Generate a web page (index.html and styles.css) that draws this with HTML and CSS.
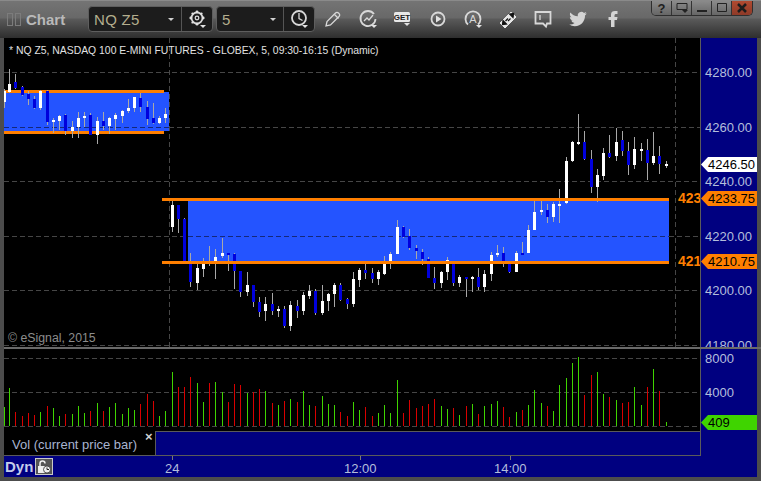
FILE: index.html
```html
<!DOCTYPE html>
<html lang="en">
<head>
<meta charset="utf-8">
<title>Chart</title>
<link rel="stylesheet" href="styles.css">
</head>
<body>
<div class="window">
  <header class="titlebar">
    <div class="grip"><i></i><i></i></div>
    <div class="app-name">Chart</div>
    <div class="combo combo-symbol">
      <span class="combo-value">NQ Z5</span><span class="caret"></span>
      <span class="combo-btn">
        <svg width="22" height="22" viewBox="0 0 22 22"><circle class="ic" cx="11" cy="10" r="5.500"/><circle class="ic-fill" cx="11" cy="3.800" r="1.400"/><circle class="ic-fill" cx="11" cy="16.200" r="1.400"/><circle class="ic-fill" cx="4.800" cy="10" r="1.400"/><circle class="ic-fill" cx="17.200" cy="10" r="1.400"/><circle class="ic-fill" cx="6.600" cy="5.600" r="1.200"/><circle class="ic-fill" cx="15.400" cy="5.600" r="1.200"/><circle class="ic-fill" cx="6.600" cy="14.400" r="1.200"/><circle class="ic-thin" cx="11" cy="10" r="1.800"/><path class="ic-fill" d="M14 17h6l-3 3z"/></svg>
      </span>
    </div>
    <div class="combo combo-interval">
      <span class="combo-value">5</span><span class="caret"></span>
      <span class="combo-btn">
        <svg width="22" height="22" viewBox="0 0 22 22"><circle class="ic" cx="11" cy="10" r="7"/><path class="ic-thin" d="M11 5v5.500l3.500 2"/><path class="ic-fill" d="M14 17h6l-3 3z"/></svg>
      </span>
    </div>
    <div class="tools">
      <svg width="22" height="22" viewBox="0 0 22 22"><path class="ic-thin" d="M4 18l1-4.500L13.500 5a2 2 0 0 1 3 0l.5.500a2 2 0 0 1 0 3L8.500 17z"/><path class="ic-thin" d="M12.500 6.500l4 4"/></svg>
      <svg width="22" height="22" viewBox="0 0 22 22"><path class="ic" d="M17 6A7.500 7.500 0 1 0 18.500 11"/><path class="ic-thin" d="M7 13l3-3 2 2 4-5"/><path class="ic-fill" d="M14 17h6l-3 3z"/></svg>
      <svg width="22" height="22" viewBox="0 0 22 22"><rect class="get-box" x="2" y="4" width="16" height="10" rx="1.500"/><text class="get-text" x="10" y="12">GET</text><path class="ic-fill" d="M12 15h6l-3 3z"/></svg>
      <svg width="22" height="22" viewBox="0 0 22 22"><circle class="ic" cx="11" cy="11" r="6.500"/><path class="ic-fill" d="M9 7.500l5.500 3.500L9 14.500z"/></svg>
      <svg width="22" height="22" viewBox="0 0 22 22"><path class="ic" d="M6 16.500a7.500 7.500 0 1 1 10 0"/><text class="a-text" x="11" y="15">A</text><path class="ic-fill" d="M14 17h6l-3 3z"/></svg>
      <svg width="22" height="22" viewBox="0 0 22 22"><path class="diamond" d="M14 4l5 5L8 20l-5-5z"/><path class="ic-cut" d="M12.500 6l4-.5-.5 4zM6 12.500l-.5 4 4-.5zM8.500 13L11 10.500M11 13l2.500-2.500"/></svg>
      <svg width="22" height="22" viewBox="0 0 22 22"><path class="ic" d="M3.500 4h15v11.500h-3.500l-1 3-3-3h-7.500z"/><path class="ic-thin" d="M8 7v5"/></svg>
      <svg width="22" height="22" viewBox="-3 -3 30 30"><path class="ic-soft" d="M23.953 4.57a10 10 0 01-2.825.775 4.958 4.958 0 002.163-2.723c-.951.555-2.005.959-3.127 1.184a4.92 4.92 0 00-8.384 4.482C7.69 8.095 4.067 6.13 1.64 3.162a4.822 4.822 0 00-.666 2.475c0 1.71.87 3.213 2.188 4.096a4.904 4.904 0 01-2.228-.616v.06a4.923 4.923 0 003.946 4.827 4.996 4.996 0 01-2.212.085 4.936 4.936 0 004.604 3.417 9.867 9.867 0 01-6.102 2.105c-.39 0-.779-.023-1.17-.067a13.995 13.995 0 007.557 2.209c9.053 0 13.998-7.496 13.998-13.985 0-.21 0-.42-.015-.63A9.935 9.935 0 0024 4.59z"/></svg>
      <svg width="22" height="22" viewBox="0 0 22 22"><path class="ic-soft" d="M9 19v-7H6.500V9H9V6.500C9 4 10.500 3 13 3h2.500v3H14c-1 0-1.500.5-1.500 1.500V9h3l-.5 3h-2.500v7z"/></svg>
    </div>
    <nav class="winbtns">
      <span class="winbtn help">?</span>
      <span class="winbtn"><svg width="16" height="14" viewBox="0 0 16 14"><path class="wb-line" d="M3 2.500h10v6H3z"/><path class="wb-fill" d="M8 9h6l-3 3z"/></svg></span>
      <span class="winbtn"><svg width="16" height="14" viewBox="0 0 16 14"><path class="wb-fill" d="M3 9h10v2H3z"/></svg></span>
      <span class="winbtn"><svg width="16" height="14" viewBox="0 0 16 14"><path class="wb-line" d="M3.500 2.500h9v8h-9z"/></svg></span>
      <span class="winbtn close"><svg width="16" height="14" viewBox="0 0 16 14"><path class="wb-x" d="M4 3l8 8M12 3l-8 8"/></svg></span>
    </nav>
  </header>

  <section class="row price-row">
    <div class="pane price-pane">
      <svg id="price" class="plot" viewBox="4 38 696 309" width="696" height="309">
        <rect class="band" x="4" y="92" width="165" height="39"/>
        <rect class="band" x="188" y="200" width="481" height="61"/>
        <path class="grid" d="M4 72.500H700M169 127.500H700M4 181.500H700M4 236.500H188M669 236.500H700M4 290.500H700M4 345.500H700"/>
        <path class="grid-band" d="M4 127.500H169M188 236.500H669"/>
        <path class="grid" d="M169.500 38V347M675.500 38V347"/>
        <rect class="level" x="4" y="90" width="160" height="3"/>
        <rect class="level" x="4" y="131" width="160" height="3"/>
        <g id="candles"></g>
        <rect class="level" x="162" y="198" width="507" height="3"/>
        <rect class="level" x="162" y="261" width="507" height="3"/>
      </svg>
      <div class="study-title">* NQ Z5, NASDAQ 100 E-MINI FUTURES - GLOBEX, 5, 09:30-16:15 (Dynamic)</div>
      <div class="copyright">© eSignal, 2015</div>
      <b class="level-text level-a">423</b>
      <b class="level-text level-b">421</b>
    </div>
    <div class="axis">
      <span class="tick t-4280">4280.00</span>
      <span class="tick t-4260">4260.00</span>
      <span class="tick t-4240">4240.00</span>
      <span class="tick t-4220">4220.00</span>
      <span class="tick t-4200">4200.00</span>
      <span class="tick t-4180">4180.00</span>
      <span class="tag tag-last">4246.50</span>
      <span class="tag tag-orange tag-a">4233.75</span>
      <span class="tag tag-orange tag-b">4210.75</span>
    </div>
  </section>

  <div class="divider"></div>

  <section class="row vol-row">
    <div class="pane vol-pane">
      <svg id="volume" class="plot" viewBox="4 349 696 82" width="696" height="82">
        <path class="grid" d="M4 358.500H700M4 392.500H700M4 426.500H700"/>
        <g id="bars"></g>
      </svg>
    </div>
    <div class="axis">
      <span class="tick t-8000">8000</span>
      <span class="tick t-4000">4000</span>
      <span class="tag tag-green">409</span>
    </div>
  </section>

  <section class="row legend-row">
    <div class="legend">
      <span class="legend-name">Vol (current price bar)</span>
      <span class="legend-close">×</span>
      <div class="legend-fill"></div>
    </div>
    <div class="axis-blank"></div>
  </section>

  <footer class="timebar">
    <span class="dyn">Dyn</span>
    <span class="lock">
      <svg width="18" height="17" viewBox="0 0 18 17"><path class="lock-shackle" d="M5 8V5.500a2.500 2.500 0 0 1 5 0"/><rect class="lock-body" x="3" y="8" width="9" height="7"/><circle class="lock-clock" cx="12" cy="11.500" r="3.500"/><path class="lock-hand" d="M12 9.500v2h2"/></svg>
    </span>
    <span class="time t-24">24</span>
    <span class="time t-12">12:00</span>
    <span class="time t-14">14:00</span>
  </footer>
</div>
<script src="chart.js"></script>
</body>
</html>
```
FILE: styles.css
```css
* { box-sizing: border-box; }
html, body { margin: 0; padding: 0; background: #4a4a4a; }
body { width: 761px; height: 481px; overflow: hidden; font-family: "Liberation Sans", Arial, sans-serif; }

.window { width: 761px; height: 481px; padding: 0 4px 4px; background: #4c4c4c; display: flex; flex-direction: column; }

.titlebar {
  height: 38px; margin: 0 -4px; padding-left: 7px; flex: none;
  display: flex; align-items: center; position: relative;
  border-top: 1px solid #8a8a8a;
  background: linear-gradient(#747474 0, #686868 17px, #5a5a5a 18px, #2e2e2e 37px);
}
.grip { display: flex; gap: 2px; width: 19px; }
.grip i { width: 6px; height: 13px; border: 1px solid #7c7c7c; }
.app-name { font-size: 15px; font-weight: 700; color: #b9b9b9; width: 62px; }
.combo {
  height: 26px; display: flex; align-items: center; margin-right: 3px;
  background: #1c1c1c; border: 1px solid #5e5e5e; border-radius: 4px;
  color: #b4ae8e; font-size: 15px; padding-left: 5px; margin-top: -1px;
}
.combo-symbol { width: 125px; }
.combo-interval { width: 99px; }
.combo-value { flex: 1; letter-spacing: .3px; }
.caret { width: 0; height: 0; border: 3px solid transparent; border-top: 3px solid #d0d0d0; border-bottom: 0; margin-right: 7px; }
.combo-btn { width: 31px; height: 24px; border-left: 1px solid #555; display: flex; align-items: center; justify-content: center; }
.tools { display: flex; gap: 13px; margin-left: 4px; margin-top: -1px; }
.tools svg { flex: none; display: block; }
.ic { fill: none; stroke: #d8d8d8; stroke-width: 1.800; }
.ic-thin { fill: none; stroke: #d8d8d8; stroke-width: 1.300; }
.ic-fill { fill: #e2e2e2; }
.ic-soft { fill: #d4d4d4; }
.ic-cut { fill: #111; stroke: #111; stroke-width: 1.200; }
.diamond { fill: #e6e6e6; stroke: #e6e6e6; stroke-width: 1; stroke-linejoin: round; }
.get-box { fill: #e8e8e8; }
.get-text { font-size: 8px; font-weight: 700; text-anchor: middle; fill: #222; font-family: "Liberation Sans", sans-serif; }
.a-text { font-size: 11px; text-anchor: middle; fill: #d8d8d8; font-family: "Liberation Sans", sans-serif; }

.winbtns {
  position: absolute; right: 8px; top: 0; height: 15px; display: flex;
  border: 1px solid #2e2e2e; border-top: 0; border-radius: 0 0 5px 5px; overflow: hidden;
}
.winbtn {
  width: 20px; height: 14px; display: flex; align-items: center; justify-content: center;
  background: linear-gradient(#8a8a8a, #666); border-right: 1px solid #333;
  font-size: 13px; font-weight: 700; color: #1e1e1e;
}
.winbtn.close { background: linear-gradient(#b04a30, #8e3a28); border-right: 0; }
.wb-line { fill: none; stroke: #222; stroke-width: 1; }
.wb-fill { fill: #222; }
.wb-x { fill: none; stroke: #1c1c1c; stroke-width: 2.500; }

.row { display: flex; flex: none; }
.price-row { height: 309px; }
.vol-row { height: 82px; }
.legend-row { height: 25px; }
.divider { height: 2px; flex: none; margin-right: -4px; background: #6a6a6a; }
.pane { width: 697px; position: relative; background: #000; border-right: 1px solid #5a5a5a; overflow: hidden; }
.plot { display: block; shape-rendering: crispEdges; }
.axis { width: 56px; position: relative; background: #000080; overflow: hidden; }
.axis-blank { width: 56px; background: #000080; }

.band { fill: #2454ff; }
.level { fill: #ff7f00; }
.grid { fill: none; stroke: #464646; stroke-width: 1; stroke-dasharray: 5 3; }
.grid-band { fill: none; stroke: #14287a; stroke-width: 1; stroke-dasharray: 5 3; }
.wick { fill: #a8a8a8; }
.up { fill: #fff; }
.down { fill: #0000dc; }
.vol-up { fill: #3fd400; }
.vol-down { fill: #d80000; }

.study-title { position: absolute; left: 5px; top: 6px; font-size: 10.400px; line-height: 13px; color: #e2e2e2; white-space: nowrap; }
.copyright { position: absolute; left: 4px; top: 293px; font-size: 12.300px; line-height: 14px; color: #8c8c8c; white-space: nowrap; }
.level-text { position: absolute; left: 674px; font-size: 14px; line-height: 16px; color: #ff7f00; white-space: nowrap; }
.level-a { top: 152px; }
.level-b { top: 215px; }

.tick { position: absolute; left: 4px; font-size: 13px; line-height: 14px; color: #b4bedc; white-space: nowrap; }
.t-4280 { top: 28px; }
.t-4260 { top: 83px; }
.t-4240 { top: 137px; }
.t-4220 { top: 192px; }
.t-4200 { top: 246px; }
.t-4180 { top: 301px; }
.t-8000 { top: 3px; }
.t-4000 { top: 37px; }
.tag {
  position: absolute; left: 0; width: 56px; height: 15px; padding-left: 7px;
  font-size: 13px; line-height: 15px; color: #000; white-space: nowrap;
  clip-path: polygon(0 50%, 7px 0, 100% 0, 100% 100%, 7px 100%);
}
.tag-last { top: 119px; background: #fff; }
.tag-orange { background: #ff7f00; }
.tag-a { top: 153px; }
.tag-b { top: 216px; }
.tag-green { top: 66px; background: #3fd400; color: #000; }

.legend { flex: 1; display: flex; align-items: stretch; border-bottom: 1px solid #5a5a5a; border-right: 1px solid #5a5a5a; background: #000; position: relative; }
.legend-name { width: 151px; padding: 6px 0 0 8px; font-size: 13px; line-height: 15px; color: #a8b4d0; white-space: nowrap; }
.legend-close { position: absolute; left: 141px; top: 0; font-size: 13px; line-height: 12px; font-weight: 700; color: #d0d0d0; }
.legend-fill { flex: 1; background: #000080; border-top: 1px solid #5a5a5a; border-left: 1px solid #5a5a5a; }

.timebar { flex: 1; margin: 0; background: #000080; position: relative; display: flex; align-items: center; padding-left: 1px; }
.dyn { font-size: 15px; font-weight: 700; color: #c4cceb; width: 30px; }
.lock { width: 18px; height: 17px; background: #555; border: 1px solid #c8c8c8; display: block; }
.lock svg { display: block; margin: -1px; }
.lock-shackle { fill: none; stroke: #eee; stroke-width: 1.500; }
.lock-body { fill: #eee; }
.lock-clock { fill: #eee; stroke: #333; stroke-width: .8; }
.lock-hand { fill: none; stroke: #222; stroke-width: 1; }
.time { position: absolute; top: 5px; font-size: 13px; line-height: 15px; color: #b4bedc; }
.time::before { content: ""; position: absolute; left: 50%; top: -5px; width: 1px; height: 4px; background: #777; }
.t-24 { left: 161px; }
.t-12 { left: 340px; }
.t-14 { left: 490px; }
```
FILE: chart.js
```js
var NS = "http://www.w3.org/2000/svg";
function rect(parent, cls, x, y, w, h) {
  var r = document.createElementNS(NS, "rect");
  r.setAttribute("class", cls);
  r.setAttribute("x", x); r.setAttribute("y", y);
  r.setAttribute("width", w); r.setAttribute("height", h);
  parent.appendChild(r);
}
// [x, wick top, wick bottom, body top, body bottom, up?] measured in 3x crop units from each origin
var candleSets = [
  { ox: 0, oy: 60, d: [
    [12,87,144,93,125,1],[28,27,99,72,96,1],[46,42,87,66,84,0],[67,78,108,81,105,0],[85,93,135,102,117,0],
    [103,108,147,117,144,0],[121,90,150,93,144,1],[142,90,195,93,186,0],[160,174,219,180,186,1],[178,165,210,168,183,1],
    [196,162,225,165,213,0],[217,183,234,201,213,1],[235,156,234,174,201,1],[253,156,201,168,174,1],[271,159,225,165,225,0],
    [292,171,252,183,225,1],[310,156,210,183,198,0],[328,171,222,174,198,1],[346,159,210,165,177,1],[367,150,189,153,168,1],
    [385,117,159,144,153,1],[403,111,156,111,144,1],[421,99,156,114,141,0],[442,123,195,141,177,0],[460,129,192,174,189,0],
    [478,168,192,174,189,1],[496,144,189,162,174,1]] },
  { ox: 160, oy: 190, d: [
    [37,27,126,45,111,1],[55,45,129,45,87,0],[73,84,216,87,213,0],[91,189,291,213,276,0],[112,222,300,234,279,1],
    [130,204,261,213,237,1],[148,168,228,213,222,0],[166,177,267,201,222,1],[187,144,204,189,198,1],[205,189,243,189,195,0],
    [223,189,297,192,243,0],[241,243,321,243,306,0],[262,246,318,285,306,1],[280,285,351,285,336,0],[298,321,381,336,366,0],
    [316,321,393,342,363,1],[337,309,375,342,363,0],[355,348,381,357,363,1],[373,348,414,357,408,0],[391,333,423,345,408,1],
    [412,330,384,348,363,0],[430,306,375,315,363,1],[448,285,327,303,318,1],[466,297,375,303,369,0],[487,285,375,333,369,1],
    [505,309,363,312,333,1],[523,279,351,285,312,1],[541,279,333,285,330,0],[562,324,357,327,342,0],[580,246,351,267,342,1],
    [598,234,291,240,270,1],[616,222,267,240,249,0],[637,234,279,249,267,0],[655,240,285,246,267,1],[673,198,255,219,252,1],
    [691,186,237,192,219,1],[712,90,192,111,192,1],[730,108,144,111,141,0],[748,117,180,138,174,0],[769,165,207,174,183,0]] },
  { ox: 400, oy: 100, d: [
    [67,447,495,456,477,0],[85,471,534,477,534,0],[103,501,567,534,549,0],[124,513,564,516,549,1],[142,471,540,480,516,1],
    [160,483,558,486,549,0],[178,525,561,531,549,1],[199,531,591,531,537,0],[217,528,576,531,537,1],[235,504,570,531,561,0],
    [253,510,576,522,561,1],[274,456,543,465,522,1],[292,435,471,459,465,1],[310,441,501,459,486,0],[328,483,519,486,516,0],
    [349,453,516,459,516,1],[367,426,465,459,465,0],[385,375,459,390,459,1],[403,303,390,336,390,1],[424,297,345,330,336,1],
    [442,312,369,330,351,0],[460,306,366,312,351,1],[478,267,369,312,318,1],[499,171,312,183,309,1],[517,123,186,126,183,1],
    [535,42,135,126,132,1],[553,93,180,126,177,0],[574,150,279,177,261,0],[592,207,306,225,261,1],[610,144,240,159,228,1],
    [628,105,174,159,171,0],[649,84,183,126,168,1],[667,93,168,120,153,0],[685,126,225,153,195,0],[703,111,207,147,195,1],
    [724,129,183,147,153,1],[742,117,240,150,189,0],[760,96,195,168,189,1],[778,138,222,168,192,0],[799,183,204,192,198,1]] }
];
var g = document.getElementById("candles");
candleSets.forEach(function (s) {
  s.d.forEach(function (c) {
    var x = s.ox + Math.floor(c[0] / 3);
    var wt = s.oy + c[1] / 3, wb = s.oy + c[2] / 3, bt = s.oy + c[3] / 3, bb = s.oy + c[4] / 3;
    rect(g, "wick", x, wt, 1, wb - wt);
    rect(g, c[5] ? "up" : "down", x - 1, bt, 3, Math.max(bb - bt, 2));
  });
});
// [x, top, green?] in 3x crop units; bars stand on the zero line at y=426
var volSets = [
  { ox: 0, d: [
    [13,201,1],[28,144,1],[46,216,0],[67,228,0],[85,219,0],[103,225,0],[121,216,1],[142,198,0],[160,204,1],[178,228,1],
    [196,222,0],[217,222,1],[235,198,1],[253,219,1],[271,213,0],[292,189,1],[310,213,0],[328,201,1],[346,189,1],[367,222,1],
    [385,204,1],[403,210,1],[421,192,0],[442,162,0],[460,183,0],[478,228,1],[496,213,1],[517,96,1],[535,141,0],[553,141,0],
    [571,111,0],[592,129,1],[610,186,1],[628,129,0],[646,126,1],[667,156,1],[685,186,0],[703,132,0],[721,135,0],[742,159,1],
    [760,156,0],[778,147,0],[796,153,1],[817,189,0],[835,195,1],[853,183,0],[871,177,1],[892,186,0],[910,153,1],[928,195,1],
    [946,198,0],[967,168,1],[985,192,1],[1003,195,1],[1021,216,0],[1042,228,0],[1060,186,1],[1078,210,1],[1096,201,0],[1117,228,0],[1135,219,1]] },
  { ox: 380, d: [
    [13,195,1],[31,219,1],[52,120,1],[70,219,0],[88,180,0],[109,204,0],[127,198,0],[145,192,0],[163,177,0],[184,198,1],
    [202,207,1],[220,204,0],[238,225,1],[259,198,0],[277,192,1],[295,222,0],[313,198,1],[334,192,1],[352,183,1],[370,201,0],
    [388,231,0],[409,216,1],[427,210,0],[445,195,1],[463,150,1],[484,189,1],[502,198,0],[520,213,1],[538,135,1],[559,114,1],
    [577,69,1],[595,51,1],[613,165,0],[634,105,0],[652,96,1],[670,162,1],[688,171,0],[709,180,1],[727,189,0],[745,186,0],
    [763,141,1],[784,195,1],[802,141,0],[820,87,1],[838,153,0],[859,246,1]] }
];
var b = document.getElementById("bars");
volSets.forEach(function (s) {
  s.d.forEach(function (v) {
    var top = 340 + v[1] / 3;
    rect(b, v[2] ? "vol-up" : "vol-down", s.ox + Math.floor(v[0] / 3), top, 1, 426 - top);
  });
});
```
